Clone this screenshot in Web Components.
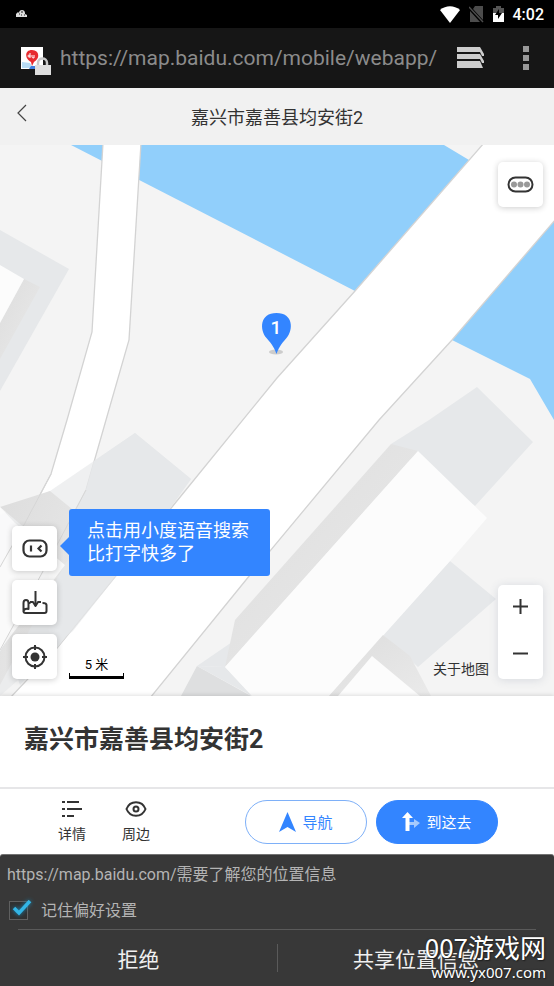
<!DOCTYPE html>
<html lang="zh-CN">
<head>
<meta charset="utf-8">
<meta name="viewport" content="width=device-width, initial-scale=1">
<title>嘉兴市嘉善县均安街2</title>
<style>
  body {
    margin: 0;
    background: #fff;
    color: #333;
    font-family: Roboto, "Noto Sans CJK SC", sans-serif;
  }
</style>
</head>
<body>
<map-app></map-app>

<script>
function define(name, html, setup) {
  const template = document.createElement("template");
  template.innerHTML = html;
  customElements.define(name, class extends HTMLElement {
    constructor() {
      super();
      const shadow = this.attachShadow({ mode: "open" });
      shadow.appendChild(template.content.cloneNode(true));
      if (setup) setup(shadow, this);
    }
  });
}

define("status-bar", `
  <style>
    :host {
      display: flex;
      align-items: center;
      gap: 9px;
      height: 28px;
      padding: 0 10px 0 16px;
      background: #000;
      color: #fff;
      font-size: 16px;
      font-weight: 500;
    }
    .note { margin-right: auto; }
    svg { display: block; flex: none; }
  </style>
  <svg class="note" width="11" height="8" viewBox="0 0 11 8" fill="#ddd">
    <path d="M0 7V4l2-2 1 1c0-4 6-4 6 0v1l2 1v2z"/>
    <path d="M3 4h1M5 2h2M8 5h1M5 5h1" stroke="#222" stroke-width="1"/>
  </svg>
  <svg width="20" height="17" viewBox="0 0 20 17" fill="#fff">
    <path d="M0 4C6-1 14-1 20 4L10 17z"/>
  </svg>
  <svg width="15" height="18" viewBox="5 0 15 18">
    <path d="M11 1h8v14L9 4zM6 6l10 11H6z" fill="#4c4c4c"/>
    <path d="M5 2l14 15" stroke="#4c4c4c" stroke-width="1.5"/>
  </svg>
  <svg width="11" height="18" viewBox="3 0 11 18">
    <path d="M3 3h3V1h5v2h3v5H3z" fill="#555"/>
    <path d="M3 8h11v9H3z" fill="#fff"/>
    <path d="M9 4l-4 6h3v4l4-6H9z" fill="#000"/>
  </svg>
  <span>4:02</span>
`);

define("browser-bar", `
  <style>
    :host {
      display: flex;
      align-items: center;
      height: 60px;
      padding: 0 16px 0 21px;
      background: #161616;
    }
    .site { flex: none; margin: 3px 8px 0 0; }
    input {
      flex: 1;
      min-width: 0;
      padding: 0;
      border: 0;
      outline: 0;
      background: none;
      color: #8b8b8b;
      font: 21px Roboto, sans-serif;
    }
    button {
      flex: none;
      padding: 0;
      border: 0;
      background: none;
      display: block;
    }
    svg { display: block; }
    .tabs { margin: 0 29px 0 16px; }
  </style>
  <svg class="site" width="31" height="32" viewBox="0 0 31 32">
    <path fill="#fff" d="M0 3h22v22H0z"/>
    <path fill="#b8dcf5" d="M1 18l8 1 3 5H1z"/>
    <path fill="#3f7fe0" d="M10 22h6l2 3H8z"/>
    <path fill="#e72b2f" d="M11 6c-8 0-7 9-1 12l1 4 2-4c6-3 6-12-2-12z"/>
    <path fill="none" stroke="#fff" d="M9 9v5M9 12a1 1 0 1 0-2 0 1 1 0 1 0 2 0M11 11v2q0 1 2 1v-3"/>
    <path fill="none" stroke="#c8c8c8" stroke-width="2.5" d="M17 22v-3c0-6 9-6 9 0v3"/>
    <path fill="#dedede" d="M14 21h16v10H14z"/>
  </svg>
  <input type="text" aria-label="网址" value="https://map.baidu.com/mobile/webapp/" spellcheck="false">
  <button class="tabs" type="button" aria-label="标签页">
    <svg width="28" height="22" viewBox="0 0 28 22" fill="#cdcdcd">
      <path d="M0 0h23l4 7v2h-2l-2-4H0z"/>
      <path d="M0 7h23l4 7v2h-2l-2-4H0z"/>
      <path d="M0 14h23l3 7H0z"/>
    </svg>
  </button>
  <button type="button" aria-label="菜单">
    <svg width="24" height="24" viewBox="0 0 24 24" fill="#999">
      <path d="M9 0h6v6H9zM9 9h6v6H9zM9 18h6v6H9z"/>
    </svg>
  </button>
`);

define("page-header", `
  <style>
    :host {
      display: grid;
      grid-template-columns: 44px 1fr 44px;
      height: 57px;
      background: #f1f1f1;
      color: #333;
    }
    button {
      padding: 0 0 10px;
      border: 0;
      background: none;
      display: grid;
      place-items: center;
    }
    h1 {
      margin: 0;
      text-align: center;
      font-size: 18px;
      font-weight: 400;
      line-height: 59px;
    }
  </style>
  <button type="button" aria-label="返回">
    <svg width="10" height="18" viewBox="0 0 10 18" fill="none" stroke="#444" stroke-width="1.2">
      <path d="M9 1L1 9l8 8"/>
    </svg>
  </button>
  <h1><slot></slot></h1>
`);

define("map-canvas", `
  <style>
    :host {
      display: block;
      overflow: hidden;
      background: #f4f4f4;
    }
    svg { display: block; width: 100%; height: 100%; }
    .water { fill: #91cffb; }
    .road { fill: #fff; stroke: #d3d3d3; stroke-width: 1.3; }
    .shade { fill: #e6e8ea; }
    .roof { fill: #fcfcfc; }
    .count {
      fill: #fff;
      font: 500 19px Roboto, sans-serif;
      text-anchor: middle;
    }
  </style>
  <svg viewBox="0 0 554 551" preserveAspectRatio="xMidYMid slice" role="img" aria-label="地图">
    <defs>
      <linearGradient id="wall" x1="0" y1="0" x2="1" y2="1">
        <stop offset="0" stop-color="#ddd"/>
        <stop offset="1" stop-color="#eaeaea"/>
      </linearGradient>
    </defs>
    <path class="water" d="M71 0L355 146 469 15 444 0zM452 195l78 39 24 41V76z"/>

    <!-- roads -->
    <path class="road" d="M103-2L92 187 67 275 51 329 25 378-2 426V512L86 345l20-70 23-80L141-2z"/>
    <path class="road" d="M484-2L355 146 277 233 172 362 57 503 10 553H150L250 430 379 275 452 195 556 74V-2z"/>

    <!-- building on the left edge -->
    <path class="shade" d="M0 85l69 39L0 246z"/>
    <path fill="url(#wall)" d="M24 134l16 8L0 214v-36z"/>
    <path class="roof" d="M0 120l24 14L0 178z"/>

    <!-- building behind the left controls -->
    <path fill="#e6e8ea" fill-opacity=".65" d="M50 346l85-58 56 46-20 28L73 486l-16 13-32 30-25 22V370z"/>
    <path class="shade" d="M94 316l41-28 56 46-20 28L57 503 20 540l-12-35 69-143 9-17z"/>
    <path fill="url(#wall)" d="M0 362l50-16 22 18 8 35-15 20L0 540v-32l57-98z"/>
    <path fill="#fcfcfc" fill-opacity=".85" d="M0 362l15 16 50 42-65 85z"/>
    <path fill="none" stroke="#d6d6d6" d="M51 329L25 378 0 422M86 345l-38 72L0 505"/>

    <!-- long building -->
    <path class="shade" d="M391 299l38-24 48-33 56 55-58 64zM450 416l46 38-78 68-35-32zM197 521l38-26-10 27z"/>
    <path fill="url(#wall)" d="M391 299l27 7-193 216 10-47z"/>
    <path fill="#dedfe0" d="M197 521l54 30h-70z"/>
    <path class="shade" d="M197 521l28 1 27 29z"/>
    <path class="roof" d="M418 306l69 67-37 43-121 135h-77l-27-29z"/>
    <path fill="url(#wall)" d="M383 490l27 21 21 40H329z"/>
    <path class="roof" d="M372 511l48 40h-82z"/>

    <!-- place marker -->
    <ellipse cx="276" cy="207" rx="7" ry="2.5" fill="#ccc"/>
    <path fill="#3385ff" d="M276.500 168c-17 0-17 17-10 25 6 7 8 10 10 16 2-6 4-9 10-16 7-8 7-25-10-25z"/>
    <text class="count" x="276" y="189">1</text>
  </svg>
`);

define("map-button", `
  <style>
    :host { display: block; }
    button {
      display: grid;
      place-items: center;
      width: 45px;
      height: 45px;
      padding: 0;
      border: 0;
      border-radius: 5px;
      background: #fff;
      box-shadow: 0 1px 6px rgba(0, 0, 0, .2);
    }
  </style>
  <button type="button"><slot></slot></button>
`, (shadow, host) => {
  shadow.querySelector("button").setAttribute("aria-label", host.getAttribute("label"));
});

define("voice-tip", `
  <style>
    :host {
      display: block;
      box-sizing: border-box;
      padding: 10px 21px 11px 18px;
      border-radius: 3px;
      background: #3385ff;
      color: #fff;
      font-size: 18px;
      line-height: 23px;
      white-space: nowrap;
    }
    :host::before {
      content: "";
      position: absolute;
      top: 28px;
      left: -9px;
      border: 9px solid transparent;
      border-left: 0;
      border-right-color: #3385ff;
    }
  </style>
  <slot></slot>
`);

define("zoom-control", `
  <style>
    :host {
      display: block;
      width: 45px;
      border-radius: 5px;
      background: #fff;
      box-shadow: 0 1px 10px rgba(60, 80, 110, .16);
    }
    button {
      display: grid;
      place-items: center;
      width: 100%;
      height: 47px;
      padding: 0 0 5px;
      border: 0;
      background: none;
    }
  </style>
  <button type="button" aria-label="放大">
    <svg width="15" height="15" viewBox="0 0 15 15" stroke="#333" stroke-width="2"><path d="M0 7.500h15M7.500 0v15"/></svg>
  </button>
  <button type="button" aria-label="缩小">
    <svg width="15" height="15" viewBox="0 0 15 15" stroke="#333" stroke-width="2"><path d="M0 7.500h15"/></svg>
  </button>
`);

define("scale-bar", `
  <style>
    :host {
      display: block;
      width: 55px;
      color: #000;
      font-size: 13px;
      line-height: 16px;
      text-align: center;
    }
    .rule {
      height: 3px;
      border: solid #000;
      border-width: 0 1px 3px;
    }
  </style>
  <slot></slot>
  <div class="rule"></div>
`);

define("map-view", `
  <style>
    :host {
      position: relative;
      display: grid;
      min-height: 400px;
    }
    map-canvas { position: absolute; inset: 0; }
    .tools, .side, .more {
      position: absolute;
      display: flex;
    }
    .tools {
      left: 12px;
      bottom: 17px;
      align-items: flex-end;
      gap: 12px;
    }
    .stack {
      position: relative;
      display: grid;
      gap: 9px;
    }
    voice-tip {
      position: absolute;
      left: 57px;
      top: -17px;
    }
    .more { top: 17px; right: 11px; }
    .side {
      right: 11px;
      bottom: 17px;
      align-items: flex-end;
      gap: 9px;
    }
    a {
      color: #333;
      font-size: 14px;
      line-height: 20px;
      text-decoration: none;
    }
  </style>
  <map-canvas></map-canvas>
  <div class="more">
    <map-button label="更多">
      <svg width="27" height="18" viewBox="0 0 27 18">
        <rect x="1.500" y="1.500" width="24" height="14" rx="7" fill="none" stroke="#333" stroke-width="2"/>
        <g fill="#999"><circle cx="7" cy="8.500" r="3"/><circle cx="13.500" cy="8.500" r="3"/><circle cx="20" cy="8.500" r="3"/></g>
      </svg>
    </map-button>
  </div>
  <div class="tools">
    <div class="stack">
      <map-button label="语音搜索">
        <svg width="26" height="20" viewBox="0 0 26 20" fill="none" stroke="#333" stroke-width="2.200">
          <rect x="1.500" y="1.500" width="23" height="16" rx="6"/>
          <path d="M9 6.500v6M19.500 6.500l-3 3 3 3"/>
        </svg>
      </map-button>
      <map-button label="下载地图">
        <svg width="26" height="24" viewBox="0 0 26 24" fill="none" stroke="#333" stroke-width="2" stroke-linejoin="round">
          <path d="M1.500 21V12q0-3 2.500-3t2.500 3v6q-4-1-5 2 0 2 2 2h19q2 0 2-2V14q0-2-4-2M6.500 12h2"/>
          <path d="M13.500 0v15"/>
          <path d="M8 11h3l2.500 4 2.500-4h3"/>
        </svg>
      </map-button>
      <map-button label="定位">
        <svg width="24" height="24" viewBox="0 0 24 24" fill="none" stroke="#333" stroke-width="2">
          <circle cx="12" cy="12" r="9.500"/>
          <circle cx="12" cy="12" r="4.500" fill="#333" stroke="none"/>
          <path d="M12 0v5M12 19v5M0 12h5M19 12h5"/>
        </svg>
      </map-button>
      <voice-tip>点击用小度语音搜索<br>比打字快多了</voice-tip>
    </div>
    <scale-bar>5 米</scale-bar>
  </div>
  <div class="side">
    <a href="#about">关于地图</a>
    <zoom-control></zoom-control>
  </div>
`);

define("place-card", `
  <style>
    :host {
      display: block;
      background: #fff;
      color: #333;
      box-shadow: 0 -1px 4px rgba(0, 0, 0, .12);
      z-index: 1;
    }
    h2 {
      margin: 0;
      padding: 25px 24px 28px;
      font-size: 25px;
      font-weight: 700;
      line-height: 38px;
    }
    .row {
      display: flex;
      align-items: center;
      justify-content: space-between;
      height: 65px;
      padding: 0 56px 0 48px;
      border-top: 2px solid #e6e6e8;
    }
    .links, .go { display: flex; }
    .links { gap: 16px; }
    .go { gap: 9px; }
    .links a {
      display: grid;
      justify-items: center;
      gap: 6px;
      width: 48px;
      color: #333;
      font-size: 14px;
      line-height: 20px;
      text-decoration: none;
    }
    .go button {
      display: flex;
      align-items: center;
      justify-content: center;
      gap: 6px;
      width: 122px;
      height: 44px;
      padding: 0;
      border: 1px solid #3385ff;
      border-radius: 22px;
      background: #3385ff;
      color: #fff;
      font: 15px "Noto Sans CJK SC", sans-serif;
    }
    .go .line {
      border-color: #7eb0f8;
      background: #fff;
      color: #3385ff;
    }
    svg { display: block; }
  </style>
  <h2><slot></slot></h2>
  <div class="row">
    <div class="links">
      <a href="#detail">
        <svg width="20" height="18" viewBox="0 0 20 18" stroke="#333" stroke-width="2">
          <path d="M0 2h3M5 2h12M0 9h3M5 9h15M0 16h3M5 16h7"/>
        </svg>
        详情
      </a>
      <a href="#nearby">
        <svg width="22" height="18" viewBox="0 0 22 18" fill="none" stroke="#333" stroke-width="2">
          <path d="M1.500 9C5 0 17 0 20.500 9 17 18 5 18 1.500 9z"/>
          <circle cx="11" cy="9" r="2.500"/>
        </svg>
        周边
      </a>
    </div>
    <div class="go">
      <button class="line" type="button">
        <svg width="17" height="20" viewBox="0 0 17 20" fill="#3385ff"><path d="M8.500 0L17 20l-8.500-5L0 20z"/></svg>
        导航
      </button>
      <button type="button">
        <svg width="18" height="20" viewBox="0 0 18 20">
          <path d="M7 13v-3h5V7l6 4-6 5v-3z" fill="#a5cafd"/>
          <path d="M5.500 0L11 6H7.500v13h-4V6H0z" fill="#fff"/>
        </svg>
        到这去
      </button>
    </div>
  </div>
`);

define("location-prompt", `
  <style>
    :host {
      display: block;
      box-sizing: border-box;
      padding: 9px 0 0;
      border-top: 1px solid #777;
      border-radius: 3px 3px 0 0;
      background: #383838;
      color: #b4b4b4;
      font-size: 16px;
      line-height: 22px;
    }
    p { margin: 0; padding: 0 7px; }
    .remember {
      display: flex;
      align-items: center;
      gap: 9px;
      padding: 14px 9px 7px;
    }
    .box { display: grid; }
    .box > * { grid-area: 1 / 1; }
    input {
      appearance: none;
      width: 19px;
      height: 19px;
      margin: 1px 4px 2px 0;
      border: 1px solid #606060;
      background: #303030;
    }
    svg { pointer-events: none; display: block; filter: drop-shadow(0 0 2px #1686b5); }
    input:not(:checked) + svg { visibility: hidden; }
    hr {
      height: 1px;
      margin: 0 18px;
      border: 0;
      background: #5a5a5a;
    }
    .choices {
      display: grid;
      grid-template-columns: 1fr 1fr;
      align-items: center;
      height: 56px;
    }
    button {
      height: 28px;
      padding: 0;
      border: 0;
      background: none;
      color: #f0f0f0;
      font: 21px/28px "Noto Sans CJK SC", sans-serif;
    }
    button + button { border-left: 1px solid #5a5a5a; }
  </style>
  <p>https://map.baidu.com/需要了解您的位置信息</p>
  <div class="remember">
    <span class="box">
      <input id="remember" type="checkbox" checked>
      <svg width="23" height="22" viewBox="0 0 23 22" fill="none" stroke="#33b5e5" stroke-width="3.500">
        <path d="M5 8l5 5L21 1"/>
      </svg>
    </span>
    <label for="remember">记住偏好设置</label>
  </div>
  <hr>
  <div class="choices">
    <button type="button">拒绝</button>
    <button type="button">共享位置信息</button>
  </div>
`);

define("site-mark", `
  <style>
    :host {
      display: grid;
      justify-items: end;
      color: #fff;
      font: 26px/32px "Noto Sans CJK SC", sans-serif;
      text-shadow: 0 0 2px #222, 1px 1px 1px #222;
      pointer-events: none;
    }
    small { font: 15px/18px "Noto Sans", sans-serif; }
  </style>
  <span>007游戏网</span>
  <small>www.yx007.com</small>
`);

define("map-app", `
  <style>
    :host {
      position: relative;
      display: flex;
      flex-direction: column;
      min-height: 100vh;
    }
    map-view { flex: 1; }
    .foot { background: #fff; }
    site-mark {
      position: absolute;
      right: 8px;
      bottom: 5px;
    }
  </style>
  <status-bar></status-bar>
  <browser-bar></browser-bar>
  <page-header>嘉兴市嘉善县均安街2</page-header>
  <map-view></map-view>
  <place-card>嘉兴市嘉善县均安街2</place-card>
  <div class="foot"><location-prompt></location-prompt></div>
  <site-mark></site-mark>
`);
</script>
</body>
</html>
